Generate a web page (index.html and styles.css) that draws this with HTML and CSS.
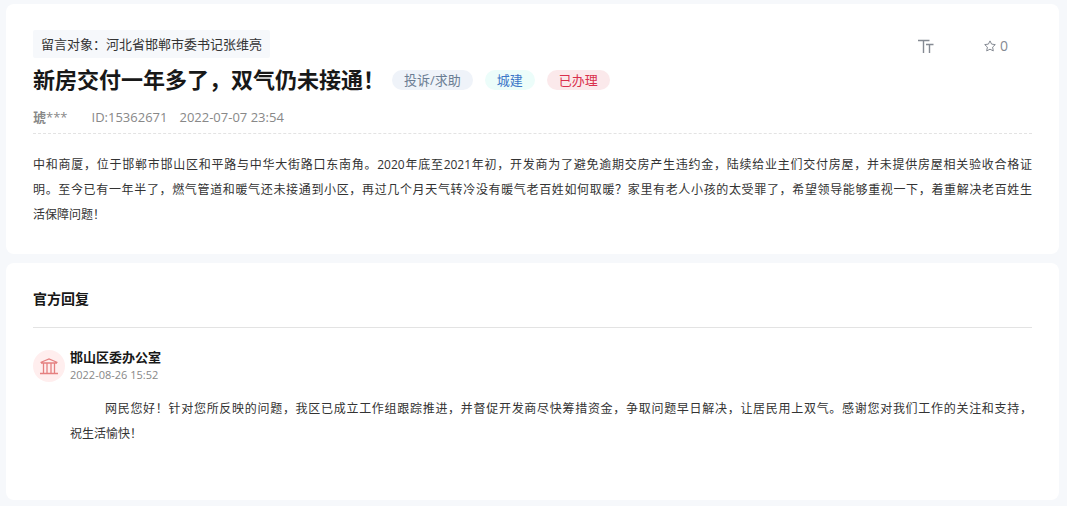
FILE: index.html
```html
<!DOCTYPE html>
<html lang="zh-CN">
<head>
<meta charset="utf-8">
<title>新房交付一年多了，双气仍未接通！</title>
<link rel="stylesheet" href="styles.css">
</head>
<body>
<main class="page">
  <article class="card message">
    <header class="message-top">
      <p class="target">留言对象：河北省邯郸市委书记张维亮</p>
      <div class="tools">
        <button class="tool" type="button" aria-label="字号">
          <svg class="icon-font" viewBox="0 0 16 14" aria-hidden="true"><path d="M0 1.500h11.500M5.500 1.500V14M8 5.500h7.500M11.500 5.500V14"/></svg>
        </button>
        <button class="tool" type="button" aria-label="收藏">
          <svg class="icon-star" viewBox="0 0 12 12" aria-hidden="true"><path d="M6 .9 7.600 4.100 11.300 4.600 8.600 7.100 9.300 10.900 6 9.200 2.700 10.900 3.400 7.100.7 4.600 4.400 4.100Z"/></svg>
          <span>0</span>
        </button>
      </div>
    </header>
    <div class="title-row">
      <h1 class="title">新房交付一年多了，双气仍未接通！</h1>
      <ul class="tags">
        <li class="tag tag-type">投诉/求助</li>
        <li class="tag tag-field">城建</li>
        <li class="tag tag-state">已办理</li>
      </ul>
    </div>
    <div class="meta">
      <span class="author"><strong>琥</strong>***</span>
      <span class="message-id">ID:15362671</span>
      <time>2022-07-07 23:54</time>
    </div>
    <p class="text message-text">
      <span class="line">中和商厦，位于邯郸市邯山区和平路与中华大街路口东南角。2020年底至2021年初，开发商为了避免逾期交房产生违约金，陆续给业主们交付房屋，并未提供房屋相关验收合格证</span>
      <span class="line">明。至今已有一年半了，燃气管道和暖气还未接通到小区，再过几个月天气转冷没有暖气老百姓如何取暖？家里有老人小孩的太受罪了，希望领导能够重视一下，着重解决老百姓生</span>
      <span class="line-end">活保障问题！</span>
    </p>
  </article>

  <section class="card reply">
    <h2 class="section-title">官方回复</h2>
    <div class="reply-item">
      <span class="avatar">
        <svg class="icon-hall" viewBox="0 0 18 17" aria-hidden="true"><path d="M.5 4.500 9 1l8.500 3.500M1 5h16M3.500 5v10M7 5v10M11 5v10M14.500 5v10M0 15.500h18"/></svg>
      </span>
      <div class="reply-main">
        <h3 class="office">邯山区委办公室</h3>
        <time class="reply-time">2022-08-26 15:52</time>
        <p class="text reply-text">
          <span class="line line-first">网民您好！针对您所反映的问题，我区已成立工作组跟踪推进，并督促开发商尽快筹措资金，争取问题早日解决，让居民用上双气。感谢您对我们工作的关注和支持，</span>
          <span class="line-end">祝生活愉快！</span>
        </p>
      </div>
    </div>
  </section>
</main>
</body>
</html>
```
FILE: styles.css
```css
* {
  box-sizing: border-box;
}

body,
h1,
h2,
h3,
p,
ul {
  margin: 0;
  padding: 0;
}

body {
  background: #f6f8fb;
  color: #333;
  font: 13px/20px "Open Sans", "Noto Sans CJK SC", sans-serif;
}

.page {
  display: flex;
  flex-direction: column;
  gap: 9px;
  padding: 4px 8px 6px 6px;
}

.card {
  padding: 26px 27px;
  border-radius: 8px;
  background: #fff;
}

.message-top {
  display: flex;
  justify-content: space-between;
  align-items: flex-start;
}

.target {
  padding: 4px 8px;
  border-radius: 2px;
  background: #f6f8fb;
  line-height: 20px;
  font-family: "Noto Sans CJK SC", sans-serif;
}

.tools {
  display: flex;
  gap: 50px;
  padding: 6px 24px 0 0;
}

.tool {
  display: flex;
  align-items: center;
  gap: 4px;
  padding: 0;
  border: 0;
  background: none;
  color: #858a93;
  font: inherit;
  font-size: 14px;
  cursor: pointer;
}

.icon-font,
.icon-star,
.icon-hall {
  fill: none;
  stroke: currentColor;
}

.icon-font {
  width: 16px;
  height: 14px;
  stroke-width: 1.4;
}

.icon-star {
  width: 12px;
  height: 12px;
}

.title-row {
  display: flex;
  align-items: center;
  gap: 7px;
  padding-top: 6px;
}

.title {
  color: #181818;
  font: bold 22px/28px "Noto Sans CJK SC", sans-serif;
}

.tags {
  display: flex;
  gap: 12px;
  padding-top: 3px;
  list-style: none;
}

.tag {
  padding: 0 12px;
  border-radius: 10px;
}

.tag-type {
  background: #eff3f9;
  color: #6b7d93;
}

.tag-field {
  background: #ecfdfa;
  color: #3c78c8;
}

.tag-state {
  background: #fbe9eb;
  color: #d9304c;
}

.meta {
  display: flex;
  gap: 12px;
  padding: 15px 0 6px;
  border-bottom: 1px dashed #e3e3e3;
  color: #888;
}

.author {
  margin-right: 12px;
}

.text {
  font-size: 12px;
  line-height: 25px;
}

.line,
.line-end {
  display: block;
}

.line {
  text-align: justify;
  text-align-last: justify;
}

.message-text {
  padding: 18px 0 1px;
}

.section-title {
  padding-bottom: 18px;
  border-bottom: 1px solid #e3e3e3;
  color: #181818;
  font-size: 14px;
  line-height: 20px;
}

.reply-item {
  display: flex;
  gap: 5px;
  padding: 20px 0 28px;
}

.avatar {
  display: flex;
  flex: none;
  justify-content: center;
  align-items: center;
  width: 32px;
  height: 32px;
  margin-top: 2px;
  border-radius: 50%;
  background: #ffeeee;
  color: #e58080;
}

.icon-hall {
  width: 18px;
  height: 17px;
  stroke-width: 1.3;
}

.reply-main {
  flex: 1;
}

.office {
  color: #181818;
  font-size: 13px;
  line-height: 18px;
}

.reply-time {
  display: block;
  color: #888;
  font-size: 11px;
  line-height: 18px;
}

.reply-text {
  padding-top: 12px;
}

.line-first {
  padding-left: 35px;
}
```
